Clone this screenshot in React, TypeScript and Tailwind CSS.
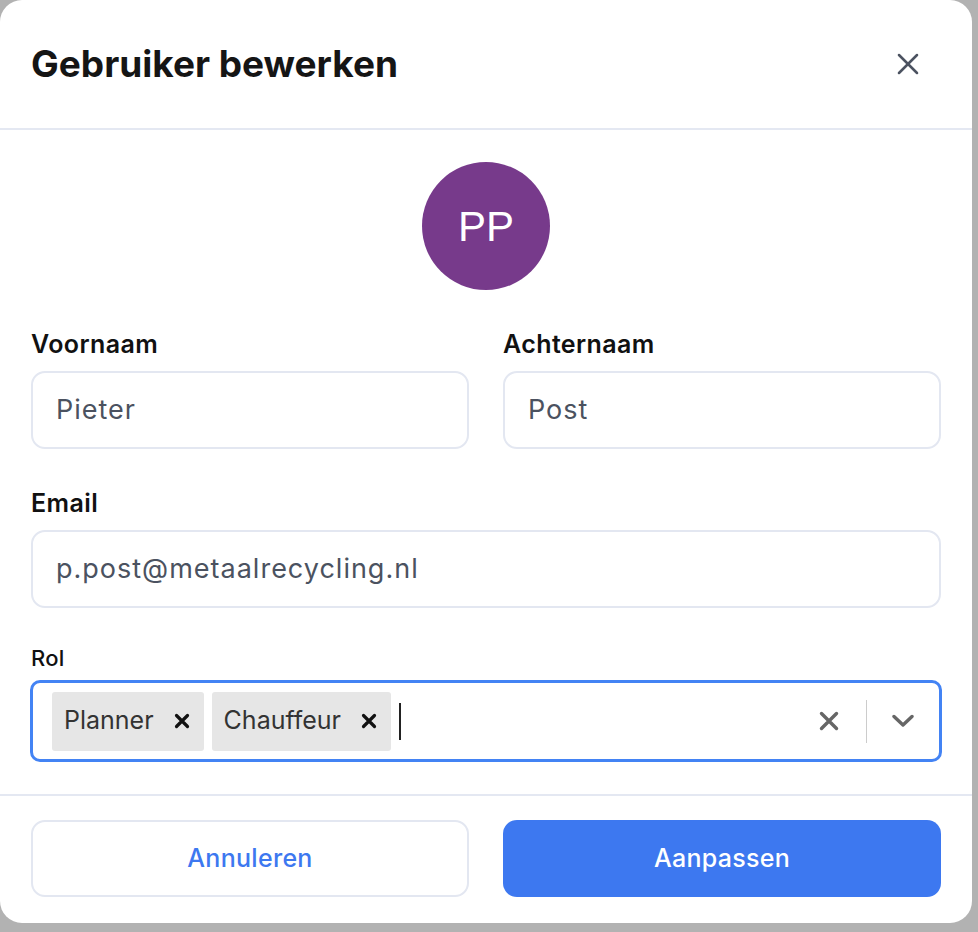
import { X } from "lucide-react"

function Field({ label, value }: { label: string; value: string }) {
  return (
    <div>
      <label className="block text-[25px] leading-[32px] font-semibold tracking-[0.4px] text-[#111111]">{label}</label>
      <div className="mt-[11px] h-[78px] rounded-[14px] border-2 border-[#e3e7f1] flex items-center px-[23px] text-[27px] tracking-[1px] text-[#4b5260]">
        {value}
      </div>
    </div>
  )
}

function Tag({ label }: { label: string }) {
  return (
    <div className="h-[59px] rounded-[3px] bg-[#e6e6e6] flex items-center pl-[12px] pr-[14px] gap-[20px]">
      <span className="text-[25px] text-[#333333]">{label}</span>
      <svg width="16" height="16" viewBox="0 0 16 16" className="text-[#111111]">
        <path d="M2.5 2.5 L13.5 13.5 M13.5 2.5 L2.5 13.5" stroke="currentColor" strokeWidth="3.2" strokeLinecap="round" />
      </svg>
    </div>
  )
}

export default function App() {
  return (
    <div className="w-[978px] h-[932px] bg-[#b2b2b2] font-['Inter',sans-serif]">
      <div className="w-[972px] h-[923px] bg-white rounded-[22px] flex flex-col overflow-hidden">
        <header className="h-[130px] shrink-0 border-b-2 border-[#e4e8f2] flex items-center justify-between pl-[31px] pr-[46px]">
          <h1 className="text-[37px] font-bold text-[#151515]">Gebruiker bewerken</h1>
          <X size={36} strokeWidth={1.7} className="text-[#4b5260]" />
        </header>

        <div className="pl-[31px] pr-[31px] flex flex-col">
          <div className="mt-[32px] self-center w-[128px] h-[128px] rounded-full bg-[#773a8b] flex items-center justify-center text-white text-[42px] font-['Liberation_Sans',sans-serif]">
            PP
          </div>

          <div className="mt-[38px] grid grid-cols-2 gap-x-[34px]">
            <Field label="Voornaam" value="Pieter" />
            <Field label="Achternaam" value="Post" />
          </div>

          <div className="mt-[38px]">
            <Field label="Email" value="p.post@metaalrecycling.nl" />
          </div>

          <div className="mt-[34px]">
            <label className="block text-[22px] leading-[32px] font-medium tracking-[0.3px] text-[#111111]">Rol</label>
            <div className="mt-[6px] -mx-[1px] h-[82px] rounded-[10px] border-[3px] border-[#4383f4] flex items-center pl-[19px] pr-[25px]">
              <div className="flex-1 flex items-center gap-[8px]">
                <Tag label="Planner" />
                <Tag label="Chauffeur" />
                <div className="w-[2px] h-[37px] bg-[#222222]" />
              </div>
              <svg width="20" height="20" viewBox="0 0 20 20" className="text-[#666666]">
                <path d="M2.5 2.5 L17.5 17.5 M17.5 2.5 L2.5 17.5" stroke="currentColor" strokeWidth="3.4" strokeLinecap="round" />
              </svg>
              <div className="ml-[27px] mr-[25px] w-px h-[43px] bg-[#cccccc]" />
              <svg width="22" height="14" viewBox="0 0 22 14" className="text-[#666666]">
                <path d="M2 2.5 L11 11 L20 2.5" fill="none" stroke="currentColor" strokeWidth="3.4" strokeLinecap="round" strokeLinejoin="round" />
              </svg>
            </div>
          </div>
        </div>

        <footer className="mt-[32px] border-t-2 border-[#e4e8f2] pt-[24px] pl-[31px] pr-[31px] grid grid-cols-2 gap-x-[34px]">
          <button className="h-[77px] rounded-[14px] border-2 border-[#e3e7f1] bg-white text-[25px] font-medium tracking-[0.3px] text-[#3d78f0]">
            Annuleren
          </button>
          <button className="h-[77px] rounded-[14px] bg-[#3d78f0] text-[25px] font-medium tracking-[0.3px] text-white">
            Aanpassen
          </button>
        </footer>
      </div>
    </div>
  )
}
